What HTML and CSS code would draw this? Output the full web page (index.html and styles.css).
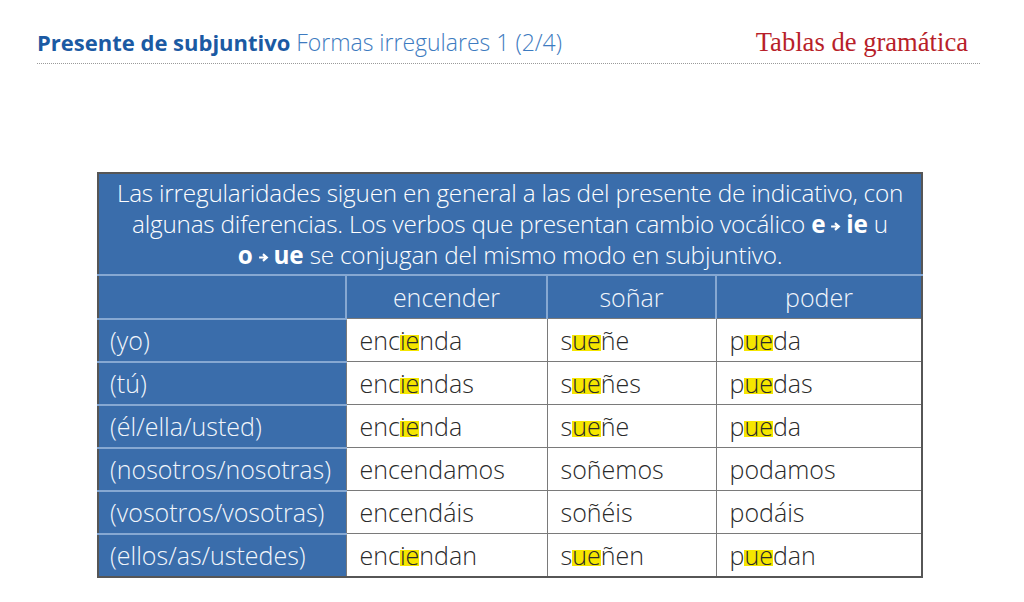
FILE: index.html
```html
<!DOCTYPE html>
<html lang="es">
<head>
<meta charset="utf-8">
<link rel="stylesheet" href="styles.css">
</head>
<body>
<header class="top">
  <h1 class="title"><span class="title-main">Presente de subjuntivo</span> <span class="title-sub">Formas irregulares 1 (2/4)</span></h1>
  <div class="brand">Tablas de gramática</div>
</header>
<main class="content">
  <table class="grid">
    <colgroup>
      <col class="c-label"><col class="c-1"><col class="c-2"><col class="c-3">
    </colgroup>
    <tr>
      <td colspan="4" class="intro">Las irregularidades siguen en general a las del presente de indicativo, con<br>algunas diferencias. Los verbos que presentan cambio vocálico <b>e<svg class="arrow" viewBox="0 0 10 10" width="11" height="11"><path d="M1 5H7M4.5 2L8 5L4.5 8" fill="none" stroke="#fff" stroke-width="2"/></svg>ie</b> u<br><b>o<svg class="arrow" viewBox="0 0 10 10" width="11" height="11"><path d="M1 5H7M4.5 2L8 5L4.5 8" fill="none" stroke="#fff" stroke-width="2"/></svg>ue</b> se conjugan del mismo modo en subjuntivo.</td>
    </tr>
    <tr class="head">
      <th class="label"></th><th>encender</th><th>soñar</th><th>poder</th>
    </tr>
    <tr>
      <th class="label">(yo)</th>
      <td>enc<span class="hl">ie</span>nda</td><td>s<span class="hl">ue</span>ñe</td><td>p<span class="hl">ue</span>da</td>
    </tr>
    <tr>
      <th class="label">(tú)</th>
      <td>enc<span class="hl">ie</span>ndas</td><td>s<span class="hl">ue</span>ñes</td><td>p<span class="hl">ue</span>das</td>
    </tr>
    <tr>
      <th class="label">(él/ella/usted)</th>
      <td>enc<span class="hl">ie</span>nda</td><td>s<span class="hl">ue</span>ñe</td><td>p<span class="hl">ue</span>da</td>
    </tr>
    <tr>
      <th class="label">(nosotros/nosotras)</th>
      <td>encendamos</td><td>soñemos</td><td>podamos</td>
    </tr>
    <tr>
      <th class="label">(vosotros/vosotras)</th>
      <td>encendáis</td><td>soñéis</td><td>podáis</td>
    </tr>
    <tr>
      <th class="label">(ellos/as/ustedes)</th>
      <td>enc<span class="hl">ie</span>ndan</td><td>s<span class="hl">ue</span>ñen</td><td>p<span class="hl">ue</span>dan</td>
    </tr>
  </table>
</main>
</body>
</html>
```

FILE: styles.css
```css
html, body {
  margin: 0;
  padding: 0;
  background: #ffffff;
}

body {
  font-family: "Open Sans", "Noto Sans", sans-serif;
  color: #2b2b2b;
  width: 1024px;
  height: 602px;
  overflow: hidden;
}

.top {
  display: flex;
  justify-content: space-between;
  align-items: flex-end;
  margin: 0 44px 0 37px;
  padding-top: 27px;
  padding-bottom: 6px;
  border-bottom: 1.5px dotted #9a9a9a;
}

.title {
  margin: 0;
  font-size: 22px;
  font-weight: 400;
  line-height: 30px;
}

.title-main {
  color: #1b5aa3;
  font-weight: 700;
}

.title-sub {
  color: #3d7bc0;
  font-weight: 300;
  font-size: 23px;
}

.brand {
  font-family: "Liberation Serif", "DejaVu Serif", serif;
  color: #b81f2a;
  font-size: 26.6px;
  line-height: 30px;
  margin-right: 12px;
}

.content {
  padding: 108px 0 0 97px;
}

.grid {
  border-collapse: collapse;
  width: 824px;
  table-layout: fixed;
  border: 2px solid #565656;
  font-size: 25px;
  font-weight: 300;
}

.c-label { width: 248px; }
.c-1 { width: 201px; }
.c-2 { width: 169px; }
.c-3 { width: 206px; }

.intro {
  background: #3a6dab;
  color: #ffffff;
  text-align: center;
  font-size: 24.3px;
  line-height: 31px;
  height: 93px;
  padding: 3px 8px 4px;
  border-bottom: 2px solid #86a8d2;
  letter-spacing: -0.2px;
  white-space: nowrap;
}

.intro b {
  font-weight: 700;
}

.arrow {
  margin: 0 5px;
  vertical-align: 1px;
}

.head th {
  background: #3a6dab;
  color: #f2f6fb;
  font-weight: 300;
  height: 41.7px;
  padding: 0;
  text-align: center;
  border-left: 2px solid #86a8d2;
}

.head th.label {
  border-left: none;
}

th.label {
  background: #3a6dab;
  color: #f2f6fb;
  font-weight: 300;
  text-align: left;
  padding: 0 0 0 11px;
  border-top: 2px solid #86a8d2;
}

td {
  height: 42px;
  padding: 0 0 0 13px;
  border: 1.5px solid #7a7a7a;
  color: #2a2a2a;
  background: #ffffff;
}

.hl {
  background: linear-gradient(to bottom, transparent 34%, #f5e600 34%, #f5e600 82%, transparent 82%);
}
```
